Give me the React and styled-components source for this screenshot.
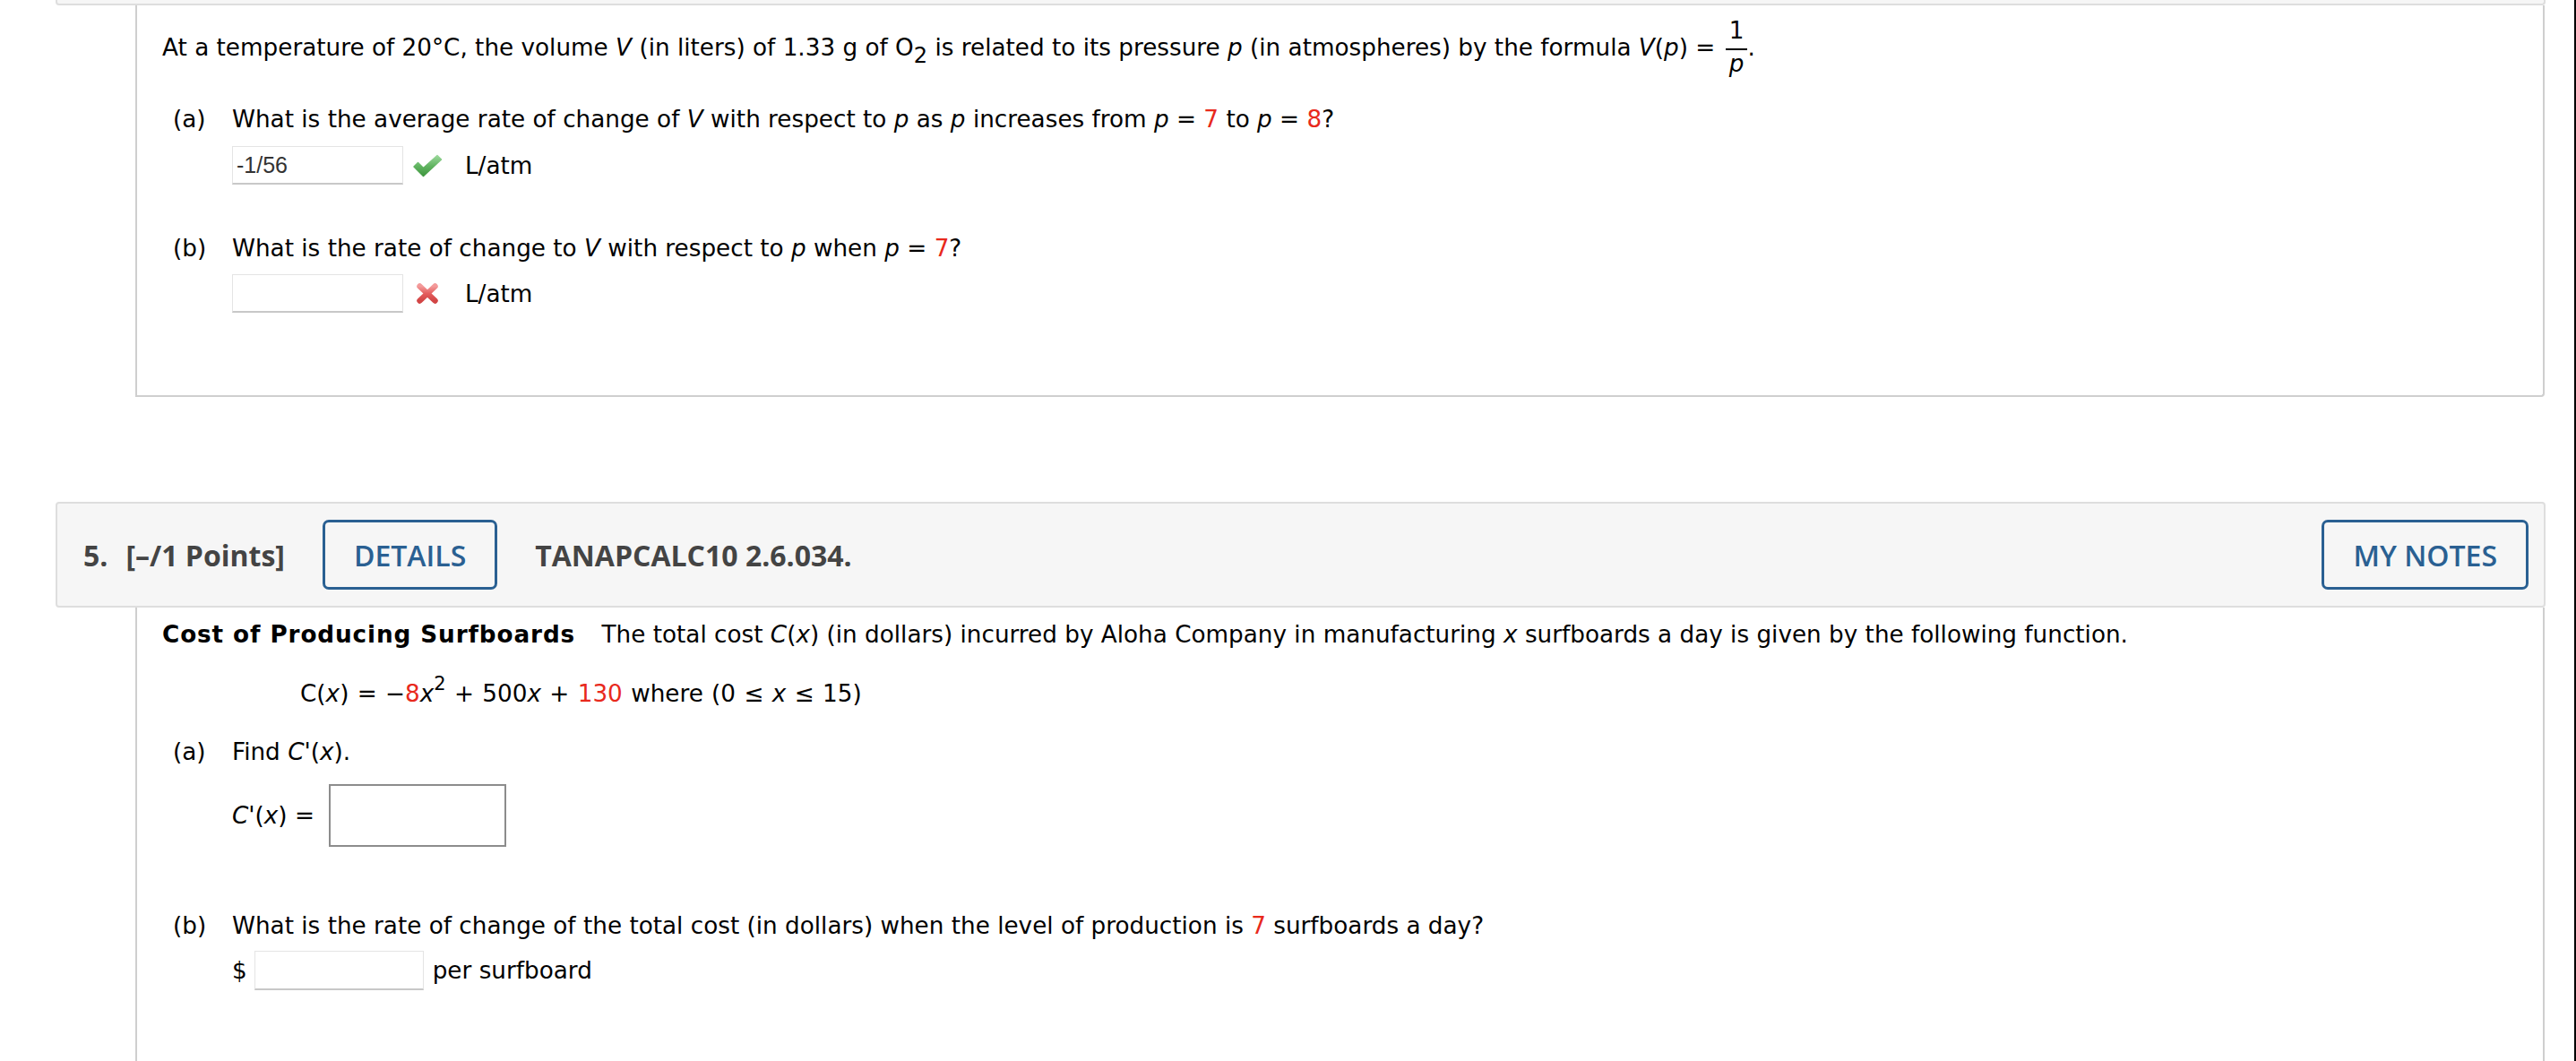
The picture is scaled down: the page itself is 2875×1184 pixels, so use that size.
import styled, { createGlobalStyle } from 'styled-components'

const GlobalStyle = createGlobalStyle`
  html, body {
    margin: 0;
    padding: 0;
    overflow: hidden;
    background: #fff;
  }
  body {
    font-family: 'DejaVu Sans', Verdana, sans-serif;
    color: #000;
  }
`

const CheckIcon = () => (
  <svg width="34" height="26" viewBox="0 0 34 26">
    <defs>
      <linearGradient id="okGrad" x1="0" y1="0" x2="0" y2="1">
        <stop offset="0" stopColor="#9bd89b" />
        <stop offset="0.5" stopColor="#62b562" />
        <stop offset="1" stopColor="#3e963e" />
      </linearGradient>
    </defs>
    <path
      d="M2 14 L6.5 9.5 L12.5 15.5 L28 1.5 L32.5 6 L12.5 24.5 Z"
      fill="url(#okGrad)"
      stroke="url(#okGrad)"
      strokeWidth="1.5"
      strokeLinejoin="round"
    />
  </svg>
)

const CrossIcon = () => (
  <svg width="26" height="25" viewBox="0 0 26 25">
    <defs>
      <linearGradient id="badGrad" x1="0" y1="0" x2="0" y2="1">
        <stop offset="0" stopColor="#f39a9a" />
        <stop offset="0.5" stopColor="#e45d5d" />
        <stop offset="1" stopColor="#d24545" />
      </linearGradient>
    </defs>
    <g stroke="url(#badGrad)" strokeWidth="6.5" strokeLinecap="round">
      <line x1="4.5" y1="4.5" x2="21.5" y2="20.5" />
      <line x1="21.5" y1="4.5" x2="4.5" y2="20.5" />
    </g>
  </svg>
)

export default function App() {
  return (
    <Page>
      <GlobalStyle />
      <Column>
        <HeaderStub />
        <Panel $pt={15} $pb={92}>
          <Line>
            At a temperature of 20°C, the volume <I>V</I> (in liters) of 1.33 g of O<Sub>2</Sub> is
            related to its pressure <I>p</I> (in atmospheres) by the formula <I>V</I>(<I>p</I>) ={' '}
            <Frac>
              <FracNum>1</FracNum>
              <FracDen>
                <I>p</I>
              </FracDen>
            </Frac>
            .
          </Line>

          <Part $mt={33}>
            <PartLabel>(a)</PartLabel>
            <PartBody>
              <Line>
                What is the average rate of change of <I>V</I> with respect to <I>p</I> as <I>p</I>{' '}
                increases from <I>p</I> = <Red>7</Red> to <I>p</I> = <Red>8</Red>?
              </Line>
              <AnswerRow $mt={14}>
                <AnswerInput $w={191} $h={43} defaultValue="-1/56" readOnly />
                <Mark>
                  <CheckIcon />
                </Mark>
                <Unit>L/atm</Unit>
              </AnswerRow>
            </PartBody>
          </Part>

          <Part $mt={55}>
            <PartLabel>(b)</PartLabel>
            <PartBody>
              <Line>
                What is the rate of change to <I>V</I> with respect to <I>p</I> when <I>p</I> ={' '}
                <Red>7</Red>?
              </Line>
              <AnswerRow $mt={13}>
                <AnswerInput $w={191} $h={43} readOnly />
                <Mark>
                  <CrossIcon />
                </Mark>
                <Unit>L/atm</Unit>
              </AnswerRow>
            </PartBody>
          </Part>
        </Panel>

        <Question>
          <Header>
            <QNumber>5.</QNumber>
            <Points>[–/1 Points]</Points>
            <HeaderButton>DETAILS</HeaderButton>
            <Source>TANAPCALC10 2.6.034.</Source>
            <HeaderButton $right>MY NOTES</HeaderButton>
          </Header>
          <Panel $pt={14} $pb={200} $open>
            <Line>
              <Bold>Cost of Producing Surfboards</Bold> The total cost <I>C</I>(<I>x</I>) (in dollars)
              incurred by Aloha Company in manufacturing <I>x</I> surfboards a day is given by the
              following function.
            </Line>
            <Formula $mt={34} $ml={154}>
              C(<I>x</I>) = −<Red>8</Red>
              <I>x</I>
              <Sup>2</Sup> + 500<I>x</I> + <Red>130</Red> where (0 ≤ <I>x</I> ≤ 15)
            </Formula>

            <Part $mt={33}>
              <PartLabel>(a)</PartLabel>
              <PartBody>
                <Line>
                  Find <I>C</I>'(<I>x</I>).
                </Line>
                <AnswerRow $mt={20}>
                  <span>
                    <I>C</I>'(<I>x</I>) =
                  </span>
                  <MathBox />
                </AnswerRow>
              </PartBody>
            </Part>

            <Part $mt={72}>
              <PartLabel>(b)</PartLabel>
              <PartBody>
                <Line>
                  What is the rate of change of the total cost (in dollars) when the level of
                  production is <Red>7</Red> surfboards a day?
                </Line>
                <AnswerRow $mt={12}>
                  <span>$</span>
                  <AnswerInput $w={189} $h={44} $ml={8} readOnly />
                  <Trail>per surfboard</Trail>
                </AnswerRow>
              </PartBody>
            </Part>
          </Panel>
        </Question>
      </Column>
    </Page>
  )
}

const Page = styled.div`
  height: 100vh;
  box-sizing: border-box;
  border-right: 2px solid #000;
  padding-left: 62px;
`

const Column = styled.div`
  width: 2779px;
`

const HeaderStub = styled.div`
  height: 4px;
  background: #f6f6f6;
  border: 2px solid #dedede;
  border-top: none;
  border-radius: 0 0 4px 4px;
`

const Panel = styled.div`
  margin: 0 1px 0 89px;
  border: 2px solid #cfcfcf;
  border-top: none;
  border-bottom: ${({ $open }) => ($open ? 'none' : '2px solid #cfcfcf')};
  border-radius: 0 0 4px 0;
  padding: ${({ $pt }) => $pt}px 0 ${({ $pb }) => $pb}px 28px;
  font-size: 26.25px;
  line-height: 32px;
`

const Line = styled.p`
  margin: ${({ $mt }) => $mt || 0}px 0 0 ${({ $ml }) => $ml || 0}px;
  white-space: nowrap;
`

const Formula = styled(Line)`
  word-spacing: 1px;
`

const I = styled.i`
  font-style: italic;
`

const Red = styled.span`
  color: #e8291c;
`

const Bold = styled.b`
  font-weight: 700;
  letter-spacing: 0.9px;
  margin-right: 21px;
`

const Sub = styled.sub`
  font-size: 0.92em;
  vertical-align: -0.34em;
  line-height: 0;
`

const Sup = styled.sup`
  font-size: 0.8em;
  vertical-align: 0.6em;
  line-height: 0;
`

const Frac = styled.span`
  display: inline-flex;
  flex-direction: column;
  align-items: center;
  vertical-align: 19px;
  margin-left: 3px;
  line-height: 26px;
`

const FracNum = styled.span``

const FracDen = styled.span`
  border-top: 2px solid #000;
  margin-top: 7px;
  padding: 2px 4px 0;
`

const Part = styled.div`
  display: grid;
  grid-template-columns: 66px 1fr;
  margin: ${({ $mt }) => $mt}px 0 0 12px;
`

const PartLabel = styled.span`
  white-space: nowrap;
`

const PartBody = styled.div``

const AnswerRow = styled.div`
  display: flex;
  align-items: center;
  margin-top: ${({ $mt }) => $mt}px;
  white-space: nowrap;
`

const AnswerInput = styled.input`
  box-sizing: border-box;
  width: ${({ $w }) => $w}px;
  height: ${({ $h }) => $h}px;
  margin: 0 0 0 ${({ $ml }) => $ml || 0}px;
  padding: 0 4px;
  border: 1px solid #e4e4e4;
  border-bottom: 2px solid #c8c8c8;
  border-radius: 0;
  outline: none;
  background: #fff;
  font: 25px 'Liberation Sans', Arial, sans-serif;
  color: #333;
`

const Mark = styled.span`
  display: flex;
  justify-content: center;
  width: 34px;
  margin-left: 10px;
`

const Unit = styled.span`
  margin-left: 25px;
`

const Trail = styled.span`
  margin-left: 10px;
`

const MathBox = styled.div`
  box-sizing: border-box;
  width: 198px;
  height: 70px;
  margin-left: 16px;
  border: 2px solid #8c8c8c;
  background: #fff;
`

const Question = styled.section`
  margin-top: 117px;
`

const Header = styled.div`
  display: flex;
  align-items: center;
  height: 114px;
  padding: 0 17px 0 29px;
  background: #f6f6f6;
  border: 2px solid #dedede;
  border-radius: 4px;
  font-family: 'Open Sans', sans-serif;
  font-size: 32px;
  font-weight: 700;
  color: #444;
  white-space: nowrap;
`

const QNumber = styled.span``

const Points = styled.span`
  margin-left: 20px;
`

const Source = styled.span`
  margin-left: 42px;
`

const HeaderButton = styled.button`
  height: 78px;
  margin-left: ${({ $right }) => ($right ? 'auto' : '42px')};
  padding: 0 32px;
  border: 3px solid #2a6092;
  border-radius: 7px;
  background: transparent;
  color: #2a6092;
  font-family: 'Open Sans', sans-serif;
  font-size: 32px;
  font-weight: 600;
  cursor: pointer;
`
